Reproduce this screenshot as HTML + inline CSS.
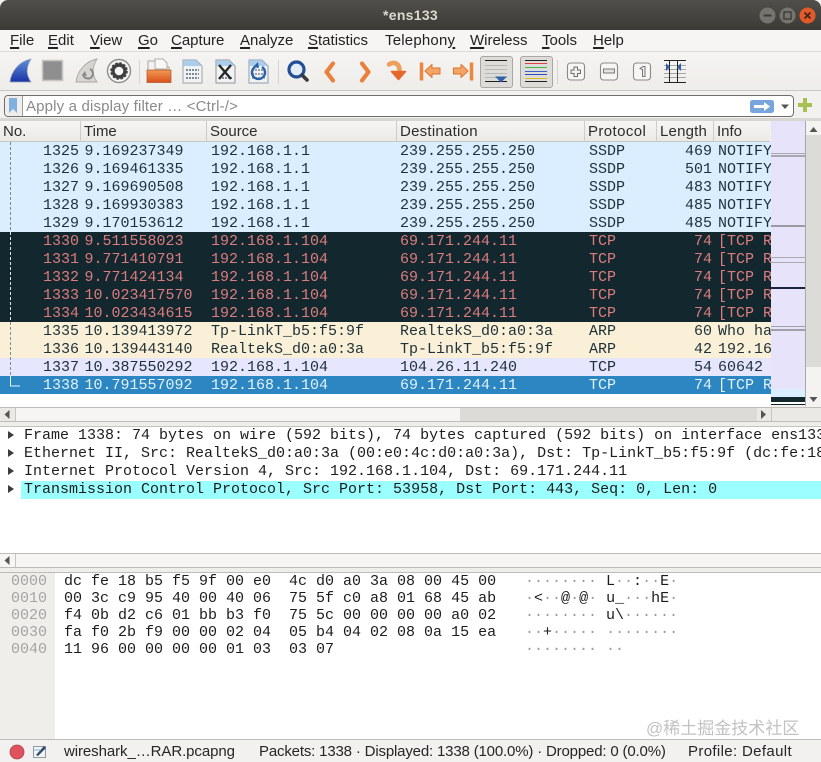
<!DOCTYPE html>
<html><head><meta charset="utf-8">
<style>
html,body{margin:0;padding:0;background:#fff}
#w{position:relative;width:821px;height:762px;overflow:hidden;background:#f2f1ef;font-family:"Liberation Sans",sans-serif;font-size:15px;color:#2c2c2c}
#w div,#w span.a,#w svg{position:absolute}
.m{top:32px;font-size:15px;line-height:18px;white-space:pre;color:#222}
.m u{text-decoration-thickness:1.5px;text-underline-offset:2px}
.r{left:0;width:771px;height:18px;overflow:hidden;font:15px/18px "Liberation Mono",monospace;white-space:pre}
.r span{position:absolute;top:1px}
.n{right:692px}.t{left:84.5px}.s{left:211px}.d{left:400px}.p{left:589px}.l{right:59px}.i{left:718px;width:53px;overflow:hidden}
.b{background:#daeeff;color:#1d3139}
.k{background:#12272e;color:#dc7c7e}
.o{background:#faf0d7;color:#1d3139}
.c{background:#e7e6ff;color:#1d3139}
.x{background:#2b86c1;color:#e3f1fb}
.h{top:121px;height:20px;background:linear-gradient(#f6f5f3,#ebe9e6);border-right:1px solid #cfcdc9;border-bottom:1px solid #c8c6c2;font-size:15px;line-height:21px;white-space:pre;padding-left:3px;box-sizing:content-box}
.f{left:24px;font:15px/18px "Liberation Mono",monospace;white-space:pre;color:#1d1d1d}
.tri{left:8px;width:0;height:0;border-left:6px solid #3c3c3c;border-top:4.5px solid transparent;border-bottom:4.5px solid transparent}
.hx{font:15px/17px "Liberation Mono",monospace;white-space:pre;color:#1c1c1c}
.hx i{font-style:normal;color:#9a9a9a}
.ml{left:771px;width:35px}
</style></head><body><div id="w">

<!-- Title bar -->
<div style="left:0;top:0;width:821px;height:30px;background:linear-gradient(#504f4a,#3b3a36);border-radius:8px 8px 0 0"></div>
<div style="left:0;top:0;width:821px;height:30px;line-height:30px;text-align:center;font-weight:bold;font-size:14px;color:#dcd9d0;letter-spacing:.3px">*ens133</div>
<svg style="left:757px;top:6px" width="62" height="20" viewBox="0 0 62 20">
<circle cx="10.5" cy="9.5" r="8" fill="#75746e"/><rect x="6.5" y="8.5" width="8" height="2" fill="#3d3c38"/>
<circle cx="30.5" cy="9.5" r="8" fill="#75746e"/><rect x="27" y="6" width="7" height="7" fill="none" stroke="#3d3c38" stroke-width="1.4"/>
<circle cx="50.5" cy="9.5" r="8" fill="#e2592a"/><path d="M47.5 6.5l6 6M53.5 6.5l-6 6" stroke="#40241a" stroke-width="1.6"/>
</svg>

<!-- Menu -->
<div style="left:0;top:30px;width:821px;height:21px;background:#f6f5f3;border-bottom:1px solid #dcdad6"></div>
<div class="m" style="left:10px"><u>F</u>ile</div>
<div class="m" style="left:48px"><u>E</u>dit</div>
<div class="m" style="left:90px"><u>V</u>iew</div>
<div class="m" style="left:138px"><u>G</u>o</div>
<div class="m" style="left:171px"><u>C</u>apture</div>
<div class="m" style="left:240px"><u>A</u>nalyze</div>
<div class="m" style="left:308px"><u>S</u>tatistics</div>
<div class="m" style="left:385px;letter-spacing:.2px">Telephon<u>y</u></div>
<div class="m" style="left:470px"><u>W</u>ireless</div>
<div class="m" style="left:542px"><u>T</u>ools</div>
<div class="m" style="left:593px"><u>H</u>elp</div>

<!-- Toolbar -->
<div style="left:0;top:52px;width:821px;height:38px;background:linear-gradient(#f5f4f2,#eeedea);border-bottom:1px solid #c9c7c3"></div>
<div style="left:480px;top:56px;width:31px;height:30px;background:#dedcd9;border:1px solid #a9a7a3;border-radius:3px"></div>
<div style="left:520px;top:56px;width:31px;height:30px;background:#dedcd9;border:1px solid #a9a7a3;border-radius:3px"></div>
<svg style="left:0;top:52px" width="700" height="38" viewBox="0 0 700 38">
<defs>
<linearGradient id="g1" x1="0" y1="0" x2="0" y2="1"><stop offset="0" stop-color="#5f8fd8"/><stop offset="1" stop-color="#1a35a8"/></linearGradient>
<linearGradient id="g2" x1="0" y1="0" x2="0" y2="1"><stop offset="0" stop-color="#f09a50"/><stop offset="1" stop-color="#d9501c"/></linearGradient>
</defs>
<!-- fin -->
<path d="M10 30C11 19 20 9 31 7C26 15 26 23 31 30Z" fill="url(#g1)" stroke="#9aa4b8" stroke-width=".8"/>
<!-- stop -->
<rect x="42.5" y="8.5" width="20" height="20" fill="#8f8f8f" stroke="#c6c5c1" stroke-width="1.6"/>
<!-- restart -->
<path d="M76 30C77 19 86 9 97 7C92 15 92 23 97 30Z" fill="#d6d5d1" stroke="#a9a8a4" stroke-width=".9"/>
<path d="M90 17a5 5 0 1 1-7 5" fill="none" stroke="#8a8a88" stroke-width="2"/><path d="M85 19l-3 4 5 1z" fill="#8a8a88"/>
<!-- gear -->
<circle cx="119" cy="19" r="11.5" fill="#f5f5f3" stroke="#8e8e8c" stroke-width="1.4"/>
<circle cx="119" cy="19" r="6" fill="none" stroke="#3f3f3f" stroke-width="3.4"/>
<circle cx="119" cy="19" r="8" fill="none" stroke="#3f3f3f" stroke-width="1.6" stroke-dasharray="2.5 1.7"/>
<path d="M139.5 8v24" stroke="#d6d4d0"/>
<!-- open folder -->
<path d="M148 20V9h10l3 3v3h8v5z" fill="#f4f2ee" stroke="#a8a6a2"/><path d="M155 7h8l4 4v6h-12z" fill="#f8f7f4" stroke="#b0aea9"/>
<path d="M147 18h24v12.5h-24z" fill="url(#g2)" stroke="#b0562b" stroke-width=".7"/>
<!-- file icons -->
<path d="M183 8h13l6 6v17h-19z" fill="#f0f2f3" stroke="#9da4aa"/><path d="M183 8h13l6 6h-19z" fill="#9cc3e6" opacity=".8"/><path d="M186 18h13M186 22h13M186 26h13" stroke="#7f8b94" stroke-width="2" stroke-dasharray="2 1"/>
<path d="M216 8h13l6 6v17h-19z" fill="#f0f2f3" stroke="#8f9499"/><path d="M216 8h13l6 6h-19z" fill="#9cc3e6" opacity=".8"/><path d="M219 26h13" stroke="#7f8b94" stroke-width="2" stroke-dasharray="2 1"/>
<path d="M219 13l12 14M231 13l-12 14" stroke="#272727" stroke-width="2.4"/>
<path d="M249 8h13l6 6v17h-19z" fill="#f0f2f3" stroke="#8f9fb0"/><path d="M249 8h13l6 6h-19z" fill="#9cc3e6" opacity=".8"/><path d="M252 18h13M252 22h13M252 26h13" stroke="#9aa3aa" stroke-width="2" stroke-dasharray="2 1"/>
<path d="M255 15a6.5 6.5 0 1 0 7 0" fill="none" stroke="#2a62a8" stroke-width="2.4"/><path d="M258 10l1 6-6-1z" fill="#2a62a8"/>
<path d="M278.5 8v24" stroke="#d6d4d0"/>
<!-- search -->
<circle cx="296.500" cy="17.500" r="7.500" fill="#e4edf6" stroke="#234f96" stroke-width="3.200"/>
<path d="M302.500 23.500l4.500 4.500" stroke="#3b3b3b" stroke-width="3.600" stroke-linecap="round"/>
<!-- arrows -->
<path d="M333 11.500l-6.500 8.500 6.500 8.500" fill="none" stroke="#e9813c" stroke-width="4.200" stroke-linecap="round" stroke-linejoin="round"/>
<path d="M362 11.500l6.500 8.500-6.500 8.500" fill="none" stroke="#e9813c" stroke-width="4.200" stroke-linecap="round" stroke-linejoin="round"/>
<!-- go to -->
<path d="M389 12.500c4-3 11-2 10.500 7" fill="none" stroke="#eda05c" stroke-width="4.600" stroke-linecap="round"/>
<path d="M391.500 19.500h14l-7 8z" fill="#e4682a" stroke="#e4682a" stroke-linejoin="round" stroke-width="1.600"/>
<!-- first/last -->
<path d="M421.500 10.500v18" stroke="#ec853d" stroke-width="3.500"/>
<path d="M425 19l7-6.500v3.500h8v6h-8v3.500z" fill="#f3a566" stroke="#e2702c" stroke-linejoin="round"/>
<path d="M471.500 10.500v18" stroke="#ec853d" stroke-width="3.500"/>
<path d="M468 19l-7-6.500v3.500h-7.500v6H461v3.500z" fill="#f3a566" stroke="#e2702c" stroke-linejoin="round"/>
<!-- autoscroll -->
<path d="M485 13.500h22M485 17.500h22M485 21.500h22M485 25.500h22" stroke="#b5b5b3"/>
<path d="M485 8.500h22M485 29.500h22" stroke="#1e1e1e"/>
<path d="M495 24.500h12l-6 6z" fill="#2f62a8"/>
<!-- colorize -->
<path d="M525 8.500h22" stroke="#222"/>
<path d="M525 11.500h22" stroke="#e04040"/>
<path d="M525 15.500h22" stroke="#40b850"/>
<path d="M525 19.500h22" stroke="#3a60d0"/>
<path d="M525 22.500h22" stroke="#2d4fb8"/>
<path d="M525 26.500h22" stroke="#e0b820"/>
<path d="M525 29.500h22" stroke="#222"/>
<path d="M557.5 8v24" stroke="#d6d4d0"/>
<!-- zoom -->
<rect x="567.5" y="11" width="17" height="17" rx="3" fill="#f7f6f4" stroke="#8c8a86" stroke-width="1.100"/>
<path d="M574 15h3.500v3h3v3.500h-3v3H574v-3h-3V18h3z" fill="#f2f1ee" stroke="#6e6d6a" stroke-width="1"/>
<rect x="600.5" y="11" width="17" height="17" rx="3" fill="#f7f6f4" stroke="#8c8a86" stroke-width="1.100"/>
<rect x="603.5" y="17" width="11" height="4" fill="#e4e3e0" stroke="#777" stroke-width="1"/>
<rect x="633.5" y="11" width="17" height="17" rx="3" fill="#f7f6f4" stroke="#8c8a86" stroke-width="1.100"/>
<path d="M640 16.500l3-2h2v10h-2.500v-7z" fill="#eeece9" stroke="#777" stroke-width="1"/>
<!-- resize columns -->
<path d="M664 13.500h22M664 17.500h22M664 21.500h22M664 25.500h22" stroke="#a5a5a5"/>
<path d="M664 8.500h22M664 30.500h22" stroke="#222"/>
<path d="M669.500 8v23M677.500 8v23" stroke="#222"/>
<path d="M666 11l4 4-4 4zM681 11l-4 4 4 4z" fill="#2f62a8"/>
</svg>

<!-- Filter bar -->
<div style="left:4px;top:95px;width:788px;height:20px;background:#fff;border:1px solid #6f6e6a;border-radius:4px"></div>
<div style="left:5px;top:96px;width:17px;height:20px;background:#efeeec;border-right:1px solid #9b9a96;border-radius:3px 0 0 3px"></div>
<svg style="left:8px;top:98px" width="10" height="15" viewBox="0 0 10 15"><path d="M1 0h8v15l-4-4-4 4z" fill="#7fb0e0"/></svg>
<div style="left:26px;top:98px;font-size:15px;line-height:18px;color:#8a8a88;white-space:pre;letter-spacing:.16px">Apply a display filter … &lt;Ctrl-/&gt;</div>
<svg style="left:750px;top:98px" width="64" height="16" viewBox="0 0 64 16">
<rect x="0" y="2" width="24" height="13" rx="2.5" fill="#78a6dc"/>
<path d="M4 7h10V4l6 4.500-6 4.500v-3H4z" fill="#fff"/>
<path d="M31 6.500h8l-4 4.500z" fill="#555"/>
<path d="M53 0h4v5h5v4h-5v5h-4V9h-5V5h5z" fill="#a8c050"/>
</svg>

<!-- Packet list header -->
<div style="left:0;top:118px;width:821px;height:3px;background:#d8d6d2"></div>
<div class="h" style="left:0;width:77px">No.</div>
<div class="h" style="left:81px;width:122px">Time</div>
<div class="h" style="left:207px;width:186px">Source</div>
<div class="h" style="left:397px;width:184px;letter-spacing:.25px">Destination</div>
<div class="h" style="left:585px;width:68px;letter-spacing:.4px">Protocol</div>
<div class="h" style="left:657px;width:53px;letter-spacing:.2px">Length</div>
<div class="h" style="left:714px;width:53px;border-right:none">Info</div>

<!-- Packet rows -->
<div style="left:0;top:142px;width:771px;height:265px;background:#fff"></div>
<div class="r b" style="top:142px"><span class="n">1325</span><span class="t">9.169237349</span><span class="s">192.168.1.1</span><span class="d">239.255.255.250</span><span class="p">SSDP</span><span class="l">469</span><span class="i">NOTIFY</span></div>
<div class="r b" style="top:160px"><span class="n">1326</span><span class="t">9.169461335</span><span class="s">192.168.1.1</span><span class="d">239.255.255.250</span><span class="p">SSDP</span><span class="l">501</span><span class="i">NOTIFY</span></div>
<div class="r b" style="top:178px"><span class="n">1327</span><span class="t">9.169690508</span><span class="s">192.168.1.1</span><span class="d">239.255.255.250</span><span class="p">SSDP</span><span class="l">483</span><span class="i">NOTIFY</span></div>
<div class="r b" style="top:196px"><span class="n">1328</span><span class="t">9.169930383</span><span class="s">192.168.1.1</span><span class="d">239.255.255.250</span><span class="p">SSDP</span><span class="l">485</span><span class="i">NOTIFY</span></div>
<div class="r b" style="top:214px"><span class="n">1329</span><span class="t">9.170153612</span><span class="s">192.168.1.1</span><span class="d">239.255.255.250</span><span class="p">SSDP</span><span class="l">485</span><span class="i">NOTIFY</span></div>
<div class="r k" style="top:232px"><span class="n">1330</span><span class="t">9.511558023</span><span class="s">192.168.1.104</span><span class="d">69.171.244.11</span><span class="p">TCP</span><span class="l">74</span><span class="i">[TCP R</span></div>
<div class="r k" style="top:250px"><span class="n">1331</span><span class="t">9.771410791</span><span class="s">192.168.1.104</span><span class="d">69.171.244.11</span><span class="p">TCP</span><span class="l">74</span><span class="i">[TCP R</span></div>
<div class="r k" style="top:268px"><span class="n">1332</span><span class="t">9.771424134</span><span class="s">192.168.1.104</span><span class="d">69.171.244.11</span><span class="p">TCP</span><span class="l">74</span><span class="i">[TCP R</span></div>
<div class="r k" style="top:286px"><span class="n">1333</span><span class="t">10.023417570</span><span class="s">192.168.1.104</span><span class="d">69.171.244.11</span><span class="p">TCP</span><span class="l">74</span><span class="i">[TCP R</span></div>
<div class="r k" style="top:304px"><span class="n">1334</span><span class="t">10.023434615</span><span class="s">192.168.1.104</span><span class="d">69.171.244.11</span><span class="p">TCP</span><span class="l">74</span><span class="i">[TCP R</span></div>
<div class="r o" style="top:322px"><span class="n">1335</span><span class="t">10.139413972</span><span class="s">Tp-LinkT_b5:f5:9f</span><span class="d">RealtekS_d0:a0:3a</span><span class="p">ARP</span><span class="l">60</span><span class="i">Who ha</span></div>
<div class="r o" style="top:340px"><span class="n">1336</span><span class="t">10.139443140</span><span class="s">RealtekS_d0:a0:3a</span><span class="d">Tp-LinkT_b5:f5:9f</span><span class="p">ARP</span><span class="l">42</span><span class="i">192.16</span></div>
<div class="r c" style="top:358px"><span class="n">1337</span><span class="t">10.387550292</span><span class="s">192.168.1.104</span><span class="d">104.26.11.240</span><span class="p">TCP</span><span class="l">54</span><span class="i">60642</span></div>
<div class="r x" style="top:376px"><span class="n">1338</span><span class="t">10.791557092</span><span class="s">192.168.1.104</span><span class="d">69.171.244.11</span><span class="p">TCP</span><span class="l">74</span><span class="i">[TCP R</span></div>
<svg style="left:8px;top:142px" width="14" height="250" viewBox="0 0 14 250">
<path d="M2.5 0V90" stroke="#7a8a96" stroke-dasharray="3 2"/>
<path d="M2.5 90V180" stroke="#dfe8ee" stroke-dasharray="3 2"/>
<path d="M2.5 180V234" stroke="#7a8a96" stroke-dasharray="3 2"/>
<path d="M2.5 234V244H12" stroke="#e9f5ff" fill="none"/>
</svg>

<!-- Minimap -->
<div class="ml" style="top:121px;height:283px;background:#e7e3fb"></div>
<div class="ml" style="top:153px;height:1px;background:#a8a8b0"></div>
<div class="ml" style="top:155px;height:2px;background:#a8a8b0"></div>
<div class="ml" style="top:225px;height:2px;background:#9a9aa4"></div>
<div class="ml" style="top:257px;height:1px;background:#a8a8b0"></div>
<div class="ml" style="top:262px;height:1px;background:#a8a8b0"></div>
<div class="ml" style="top:287px;height:2px;background:#1c2340"></div>
<div class="ml" style="top:326px;height:1px;background:#a0a0a8"></div>
<div class="ml" style="top:329px;height:2px;background:#a0a0a8"></div>
<div class="ml" style="top:389px;height:8px;background:#daeeff"></div>
<div class="ml" style="top:397px;height:5px;background:#12272e"></div>
<div class="ml" style="top:402px;height:2px;background:#fff"></div>
<div class="ml" style="top:404px;height:1px;background:#12272e"></div>
<div style="left:805px;top:121px;width:1px;height:285px;background:#a9a8a5"></div>

<!-- Vertical scrollbar -->
<div style="left:806px;top:121px;width:15px;height:286px;background:#dddbd7"></div>
<div style="left:806px;top:121px;width:15px;height:14px;background:#f4f3f1"></div>
<div style="left:806px;top:367px;width:15px;height:27px;background:#f4f3f1"></div>
<div style="left:806px;top:394px;width:15px;height:13px;background:#f4f3f1"></div>
<svg style="left:806px;top:121px" width="15" height="286" viewBox="0 0 15 286"><path d="M3.5 11l4-5 4 5z" fill="#555"/><path d="M3.5 276l4 5 4-5z" fill="#555"/></svg>

<!-- Horizontal scrollbar 1 -->
<div style="left:0;top:407px;width:821px;height:15px;background:#ebe9e6;border-top:1px solid #bdbcb8;border-bottom:1px solid #bdbcb8;box-sizing:border-box"></div>
<div style="left:15px;top:408px;width:444px;height:13px;background:#f6f5f3;border-left:1px solid #c8c6c2;border-right:1px solid #c8c6c2"></div>
<div style="left:460px;top:408px;width:297px;height:13px;background:#dddbd7"></div>
<div style="left:771px;top:408px;width:1px;height:13px;background:#c8c6c2"></div>
<svg style="left:0;top:408px" width="775" height="13" viewBox="0 0 775 13"><path d="M9.5 2v9l-5-4.500z" fill="#555"/><path d="M761 2v9l5-4.500z" fill="#555"/></svg>

<!-- Details pane -->
<div style="left:0;top:422px;width:821px;height:4px;background:#efeeeb"></div>
<div style="left:0;top:426px;width:821px;height:127px;background:#fff;border-top:1px solid #c4c3bf;box-sizing:border-box"></div>
<div style="left:21px;top:481px;width:800px;height:18px;background:#9cffff"></div>
<div class="tri" style="top:431px"></div><div class="tri" style="top:449px"></div><div class="tri" style="top:467px"></div><div class="tri" style="top:485px"></div>
<div class="f" style="top:427px;width:797px;overflow:hidden">Frame 1338: 74 bytes on wire (592 bits), 74 bytes captured (592 bits) on interface ens133</div>
<div class="f" style="top:445px;width:797px;overflow:hidden">Ethernet II, Src: RealtekS_d0:a0:3a (00:e0:4c:d0:a0:3a), Dst: Tp-LinkT_b5:f5:9f (dc:fe:18</div>
<div class="f" style="top:463px">Internet Protocol Version 4, Src: 192.168.1.104, Dst: 69.171.244.11</div>
<div class="f" style="top:481px">Transmission Control Protocol, Src Port: 53958, Dst Port: 443, Seq: 0, Len: 0</div>

<!-- Horizontal scrollbar 2 -->
<div style="left:0;top:553px;width:821px;height:15px;background:#f6f5f3;border-top:1px solid #bdbcb8;border-bottom:1px solid #bdbcb8;box-sizing:border-box"></div>
<div style="left:15px;top:554px;width:1px;height:13px;background:#c8c6c2"></div>
<svg style="left:0;top:554px" width="15" height="13" viewBox="0 0 15 13"><path d="M9.5 2v9l-5-4.500z" fill="#555"/></svg>

<!-- Hex pane -->
<div style="left:0;top:568px;width:821px;height:4px;background:#efeeeb"></div>
<div style="left:0;top:572px;width:821px;height:167px;background:#fff;border-top:1px solid #bdbcb8;box-sizing:border-box"></div>
<div style="left:0;top:573px;width:55px;height:166px;background:#efeeeb"></div>
<div class="hx" style="left:11px;top:573px;color:#a4a4a2">0000
0010
0020
0030
0040</div>
<div class="hx" style="left:64px;top:573px">dc fe 18 b5 f5 9f 00 e0  4c d0 a0 3a 08 00 45 00
00 3c c9 95 40 00 40 06  75 5f c0 a8 01 68 45 ab
f4 0b d2 c6 01 bb b3 f0  75 5c 00 00 00 00 a0 02
fa f0 2b f9 00 00 02 04  05 b4 04 02 08 0a 15 ea
11 96 00 00 00 00 01 03  03 07</div>
<div class="hx" style="left:525px;top:573px"><i>········</i> L<i>··</i>:<i>··</i>E<i>·</i>
<i>·</i>&lt;<i>··</i>@<i>·</i>@<i>·</i> u_<i>···</i>hE<i>·</i>
<i>········</i> u\<i>······</i>
<i>··</i>+<i>·····</i> <i>········</i>
<i>········</i> <i>··</i></div>

<!-- Watermark -->
<div style="left:646px;top:718px;font:17px/22px 'Liberation Sans','Noto Sans CJK SC',sans-serif;color:#c2c2c0;white-space:pre">@稀土掘金技术社区</div>

<!-- Status bar -->
<div style="left:0;top:739px;width:821px;height:23px;background:#f2f1ef;border-top:1px solid #bdbcb8;box-sizing:border-box"></div>
<svg style="left:8px;top:743px" width="42" height="18" viewBox="0 0 42 18">
<circle cx="9" cy="9" r="7" fill="#e0525c" stroke="#a84a50" stroke-width=".8"/>
<rect x="25.5" y="3.500" width="12" height="11" fill="#f2f4f6" stroke="#8e9aa4"/>
<path d="M28 12l8-9 2 2-8 8z" fill="#2f4a6a"/><path d="M26 7h7" stroke="#88b0d8"/>
</svg>
<div style="left:64px;top:743px;font-size:15px;line-height:18px;white-space:pre;color:#262626;letter-spacing:-.08px">wireshark_…RAR.pcapng</div>
<div style="left:259px;top:743px;font-size:15px;line-height:18px;white-space:pre;color:#262626;letter-spacing:-.17px">Packets: 1338 · Displayed: 1338 (100.0%) · Dropped: 0 (0.0%)</div>
<div style="left:688px;top:743px;font-size:15px;line-height:18px;white-space:pre;color:#262626;letter-spacing:.35px">Profile: Default</div>
</div></body></html>
